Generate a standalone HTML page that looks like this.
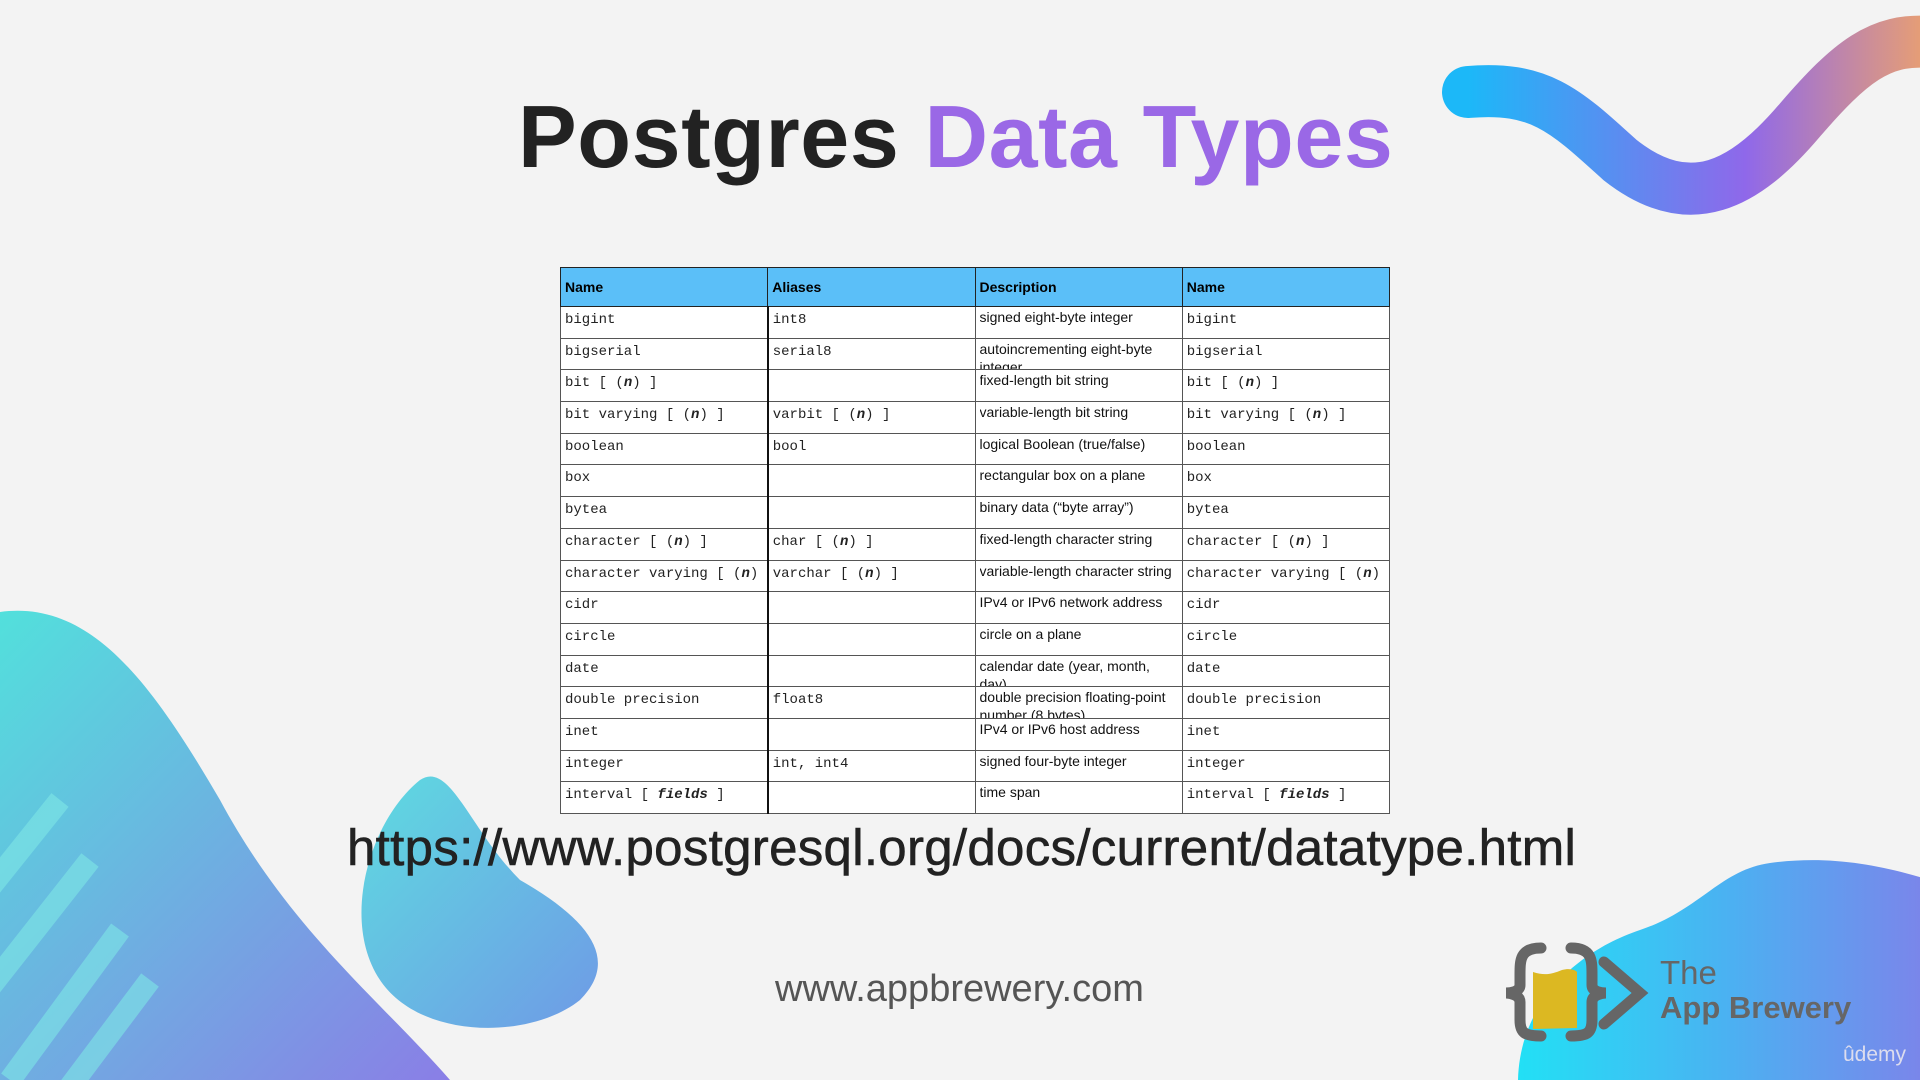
<!DOCTYPE html>
<html><head><meta charset="utf-8"><style>
body{margin:0;width:1920px;height:1080px;background:#f3f3f3;position:relative;overflow:hidden;font-family:"Liberation Sans",sans-serif}
svg.bg{position:absolute;left:0;top:0}
.title{position:absolute;left:518px;top:86px;font-size:88px;font-weight:bold;color:#222;letter-spacing:0.6px;white-space:nowrap}
.title span{color:#9a68e6}
table{position:absolute;left:560px;top:267px;width:830px;border-collapse:collapse;table-layout:fixed;background:#fff}
td,th{border:1.5px solid #555;padding:0 4px;vertical-align:top;font-size:14px}
td>div{height:30.7px;overflow:hidden;white-space:nowrap}
th{background:#5bbff8;text-align:left;font-weight:bold;font-size:14px;height:29px;line-height:38px;border-color:#222;padding:0 4px;overflow:hidden}
td.m div{font-family:"Liberation Mono",monospace;font-size:14px;line-height:26px;color:#222}
td.d div{font-size:14px;line-height:18px;white-space:normal;color:#111;padding-top:1px;height:29.7px}
tr td:first-child{border-right:2.5px solid #111}
.url{position:absolute;left:347px;top:818px;font-size:51px;color:#222;white-space:nowrap;letter-spacing:0.3px;-webkit-text-stroke:0.6px #222}
.www{position:absolute;left:775px;top:968px;font-size:38px;color:#555;white-space:nowrap}
.the{position:absolute;left:1660px;top:954px;font-size:33px;color:#666}
.ab{position:absolute;left:1660px;top:990px;font-size:31px;font-weight:bold;color:#666;white-space:nowrap}
.ud{position:absolute;left:1843px;top:1043px;font-size:21px;color:#dde;white-space:nowrap}
</style></head><body>
<svg class="bg" width="1920" height="1080" viewBox="0 0 1920 1080">
<defs>
<linearGradient id="w" x1="0" x2="1" y1="0" y2="0"><stop offset="0" stop-color="#1cb8f8"/><stop offset="0.6" stop-color="#8f68ea"/><stop offset="1" stop-color="#eaa070"/></linearGradient>
<linearGradient id="bl" x1="0" x2="1" y1="0" y2="1"><stop offset="0" stop-color="#52e0dc"/><stop offset="1" stop-color="#8a7ee6"/></linearGradient>
<linearGradient id="bb" x1="0" x2="1" y1="0" y2="1"><stop offset="0" stop-color="#5edbe0"/><stop offset="1" stop-color="#6f9ae6"/></linearGradient>
<linearGradient id="br" x1="0" x2="1" y1="0" y2="0"><stop offset="0" stop-color="#22e0f5"/><stop offset="0.5" stop-color="#4ab2f2"/><stop offset="1" stop-color="#7c84ea"/></linearGradient>
</defs>
<path d="M1468,92 C1540,86 1565,110 1620,160 C1690,215 1745,185 1800,120 C1850,62 1880,38 1930,42" fill="none" stroke="url(#w)" stroke-width="52" stroke-linecap="round"/>
<path d="M0,612 C90,600 150,680 220,800 C290,930 380,1000 450,1080 L0,1080 Z" fill="url(#bl)"/>
<g stroke="#7fe8e6" stroke-width="22" opacity="0.6"><path d="M-20,900 L60,800"/><path d="M-20,1000 L90,860"/><path d="M10,1080 L120,930"/><path d="M60,1100 L150,980"/></g>
<path d="M420,780 C450,760 470,830 520,880 C590,920 620,960 580,1000 C530,1040 420,1040 380,980 C340,920 370,820 420,780 Z" fill="url(#bb)"/>
<path d="M1518,1080 C1520,1000 1580,950 1640,930 C1700,910 1720,870 1770,863 C1830,855 1880,865 1930,880 L1930,1080 Z" fill="url(#br)"/>
<g fill="none" stroke="#666" stroke-width="11" stroke-linecap="round">
<path d="M1541,948 C1520,948 1520,960 1520,975 L1520,985 C1520,992 1510,993 1506,993 C1510,993 1520,995 1520,1002 L1520,1020 C1520,1033 1525,1036 1541,1036"/>
<path d="M1571,948 C1592,948 1592,960 1592,975 L1592,985 C1592,992 1602,993 1606,993 C1602,993 1592,995 1592,1002 L1592,1020 C1592,1033 1587,1036 1571,1036"/>
<path d="M1604,962 L1640,993 L1604,1024"/>
</g>
<path d="M1533,972 C1545,976 1552,974 1562,970 C1570,968 1575,970 1577,972 L1577,1028 L1533,1029 Z" fill="#dcb822"/>
</svg>
<div class="title">Postgres <span>Data Types</span></div>
<table>
<tr><th>Name</th><th>Aliases</th><th>Description</th><th>Name</th></tr>
<tr><td class="m"><div>bigint</div></td><td class="m"><div>int8</div></td><td class="d"><div>signed eight-byte integer</div></td><td class="m"><div>bigint</div></td></tr>
<tr><td class="m"><div>bigserial</div></td><td class="m"><div>serial8</div></td><td class="d"><div>autoincrementing eight-byte integer</div></td><td class="m"><div>bigserial</div></td></tr>
<tr><td class="m"><div>bit [ (<b><i>n</i></b>) ]</div></td><td class="m"><div></div></td><td class="d"><div>fixed-length bit string</div></td><td class="m"><div>bit [ (<b><i>n</i></b>) ]</div></td></tr>
<tr><td class="m"><div>bit varying [ (<b><i>n</i></b>) ]</div></td><td class="m"><div>varbit [ (<b><i>n</i></b>) ]</div></td><td class="d"><div>variable-length bit string</div></td><td class="m"><div>bit varying [ (<b><i>n</i></b>) ]</div></td></tr>
<tr><td class="m"><div>boolean</div></td><td class="m"><div>bool</div></td><td class="d"><div>logical Boolean (true/false)</div></td><td class="m"><div>boolean</div></td></tr>
<tr><td class="m"><div>box</div></td><td class="m"><div></div></td><td class="d"><div>rectangular box on a plane</div></td><td class="m"><div>box</div></td></tr>
<tr><td class="m"><div>bytea</div></td><td class="m"><div></div></td><td class="d"><div>binary data (“byte array”)</div></td><td class="m"><div>bytea</div></td></tr>
<tr><td class="m"><div>character [ (<b><i>n</i></b>) ]</div></td><td class="m"><div>char [ (<b><i>n</i></b>) ]</div></td><td class="d"><div>fixed-length character string</div></td><td class="m"><div>character [ (<b><i>n</i></b>) ]</div></td></tr>
<tr><td class="m"><div>character varying [ (<b><i>n</i></b>)</div></td><td class="m"><div>varchar [ (<b><i>n</i></b>) ]</div></td><td class="d"><div>variable-length character string</div></td><td class="m"><div>character varying [ (<b><i>n</i></b>)</div></td></tr>
<tr><td class="m"><div>cidr</div></td><td class="m"><div></div></td><td class="d"><div>IPv4 or IPv6 network address</div></td><td class="m"><div>cidr</div></td></tr>
<tr><td class="m"><div>circle</div></td><td class="m"><div></div></td><td class="d"><div>circle on a plane</div></td><td class="m"><div>circle</div></td></tr>
<tr><td class="m"><div>date</div></td><td class="m"><div></div></td><td class="d"><div>calendar date (year, month, day)</div></td><td class="m"><div>date</div></td></tr>
<tr><td class="m"><div>double precision</div></td><td class="m"><div>float8</div></td><td class="d"><div>double precision floating-point number (8 bytes)</div></td><td class="m"><div>double precision</div></td></tr>
<tr><td class="m"><div>inet</div></td><td class="m"><div></div></td><td class="d"><div>IPv4 or IPv6 host address</div></td><td class="m"><div>inet</div></td></tr>
<tr><td class="m"><div>integer</div></td><td class="m"><div>int, int4</div></td><td class="d"><div>signed four-byte integer</div></td><td class="m"><div>integer</div></td></tr>
<tr><td class="m"><div>interval [ <b><i>fields</i></b> ]</div></td><td class="m"><div></div></td><td class="d"><div>time span</div></td><td class="m"><div>interval [ <b><i>fields</i></b> ]</div></td></tr>
</table>
<div class="url">https://www.postgresql.org/docs/current/datatype.html</div>
<div class="www">www.appbrewery.com</div>
<div class="the">The</div>
<div class="ab">App Brewery</div>
<div class="ud">ûdemy</div>
</body></html>
